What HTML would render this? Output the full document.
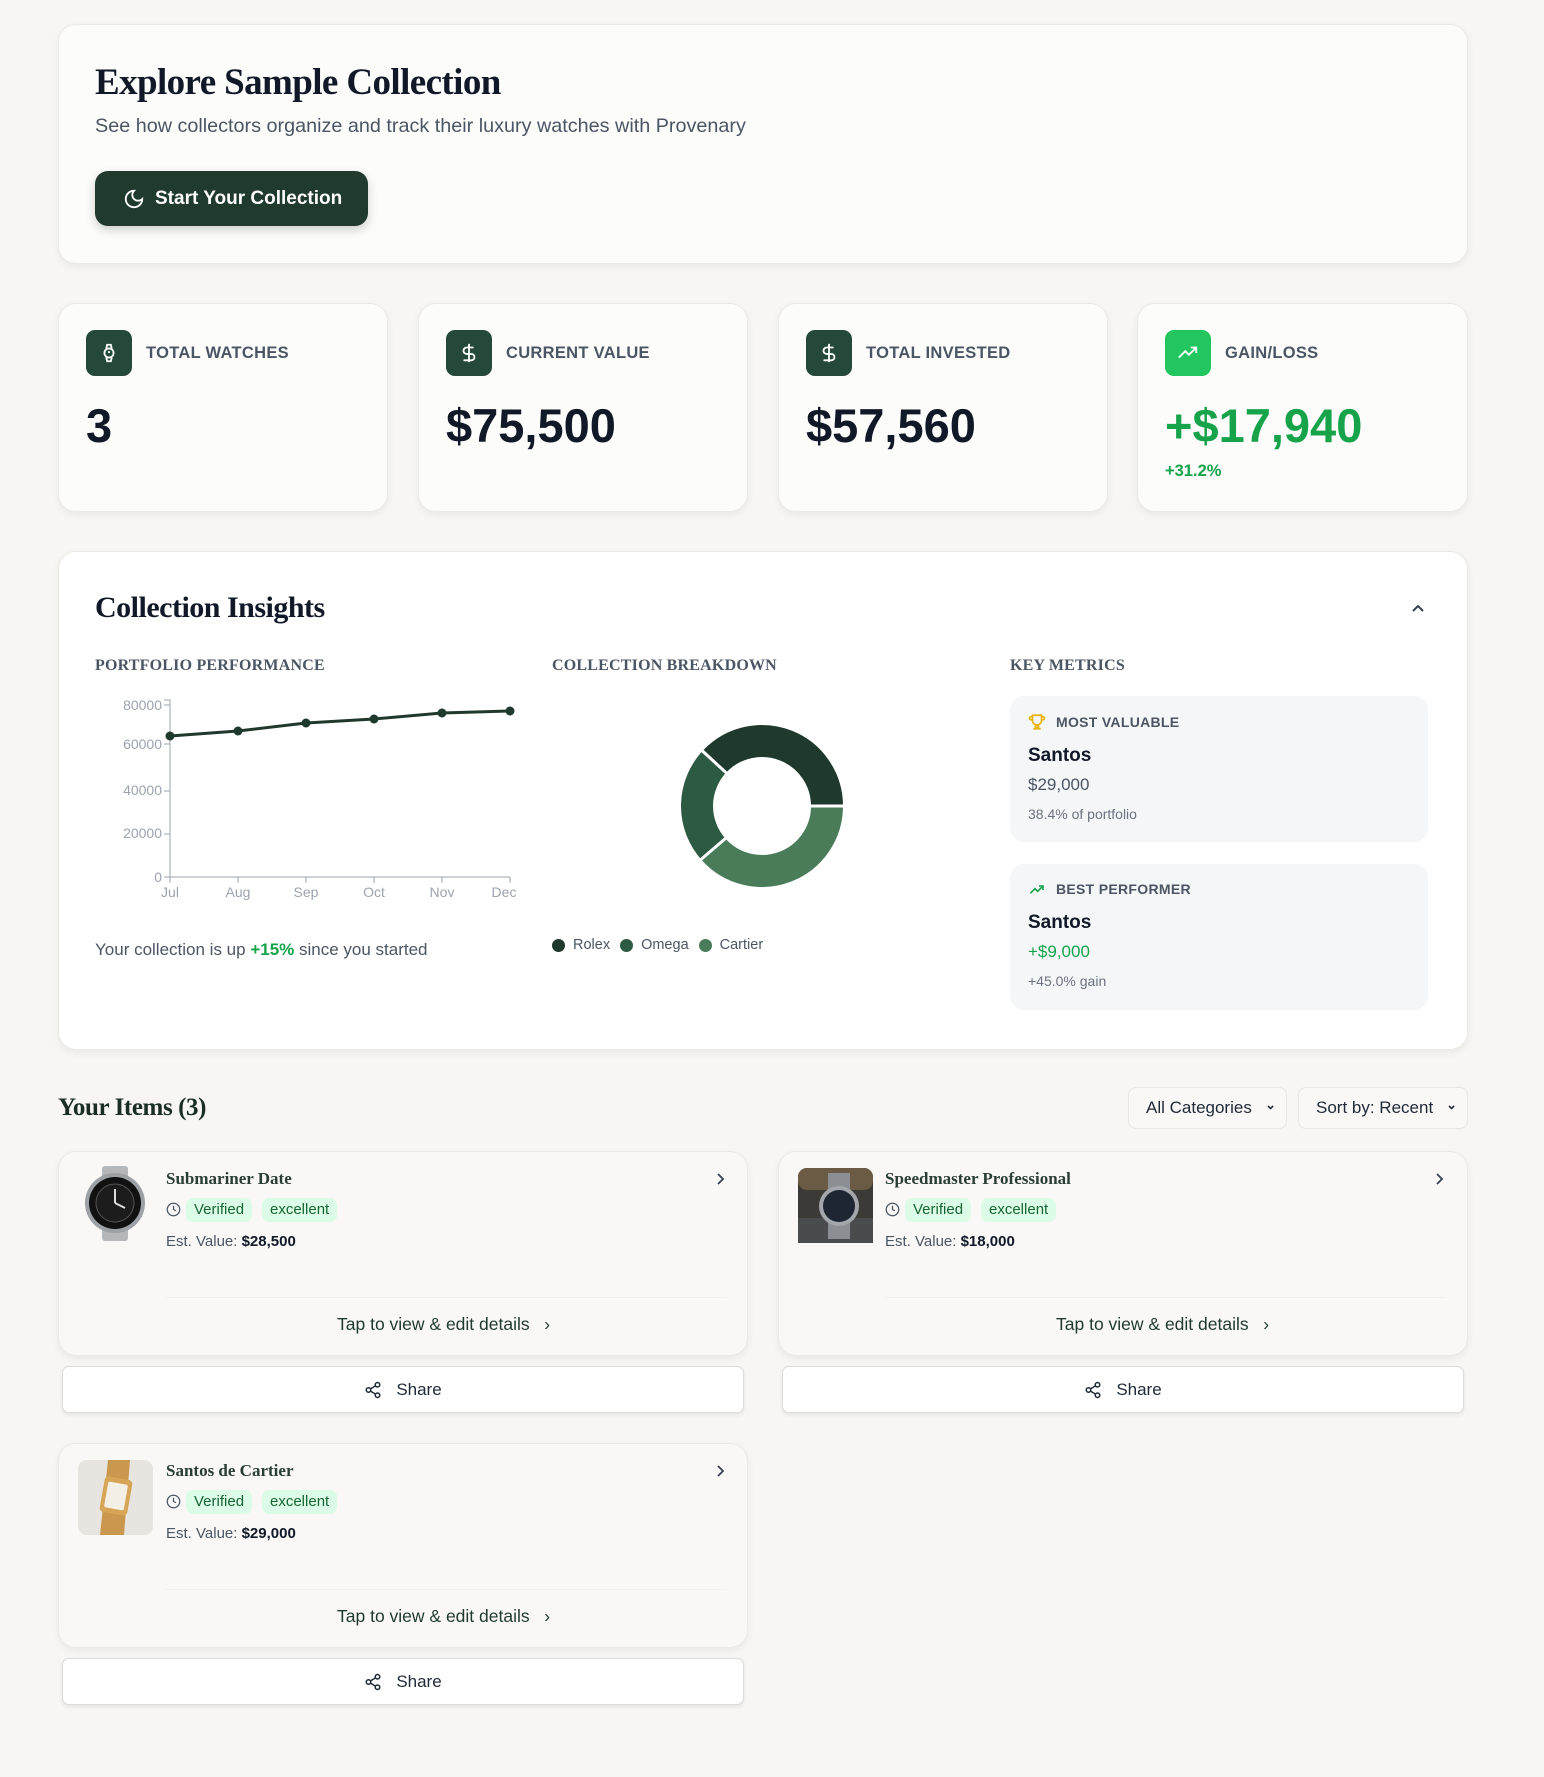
<!DOCTYPE html>
<html><head><meta charset="utf-8"><style>
*{box-sizing:border-box;margin:0;padding:0}
body{width:1544px;height:1777px;background:#f7f6f4;font-family:"Liberation Sans",sans-serif;color:#111827;position:relative;overflow:hidden}
.a{position:absolute}
.card{position:absolute;background:#fcfcfb;border:1px solid #ebeae6;border-radius:18px;box-shadow:0 3px 8px rgba(0,0,0,.06)}
.serif{font-family:"Liberation Serif",serif}
.lbl{font-size:16.5px;font-weight:bold;color:#4b5563;letter-spacing:.3px}
.icon{position:absolute;width:46px;height:46px;border-radius:9px;background:#24493a;display:flex;align-items:center;justify-content:center}
.val{position:absolute;font-size:47px;font-weight:bold;color:#111827}
.h3{position:absolute;font-family:"Liberation Serif",serif;font-size:16px;font-weight:bold;color:#4b5563;letter-spacing:.2px}
.km{position:absolute;left:1010px;width:418px;background:#f5f6f7;border-radius:14px}
.badge{position:absolute;height:24px;line-height:24px;padding:0 8px;border-radius:7px;background:#dcfce7;color:#166534;font-size:15px}
.share{position:absolute;height:47px;background:#fff;border:1px solid #dcdcdc;border-radius:7px;box-shadow:0 2px 4px rgba(0,0,0,.08);display:flex;align-items:center;justify-content:center;font-size:17px;color:#1f2937;gap:14px}
.sel{position:absolute;top:1087px;height:42px;border:1px solid #e7e6e2;border-radius:8px;background:#f9f8f6;font-size:17px;color:#1f2937;line-height:40px;padding-left:17px}
.nm{position:absolute;font-family:"Liberation Serif",serif;font-size:17px;font-weight:bold;color:#2a3d33}
</style></head><body>

<div class="card" style="left:58px;top:24px;width:1410px;height:240px"></div>
<div class="a serif" style="left:95px;top:61px;font-size:37px;font-weight:bold;letter-spacing:-0.6px;color:#111827">Explore Sample Collection</div>
<div class="a" style="left:95px;top:115px;font-size:19.8px;color:#4b5563">See how collectors organize and track their luxury watches with Provenary</div>
<div class="a" style="left:95px;top:171px;width:273px;height:55px;background:#213a2e;border-radius:13px;box-shadow:0 4px 10px rgba(0,0,0,.18);color:#fff;font-size:19px;font-weight:bold;display:flex;align-items:center;padding-left:28px;gap:10px">
<svg width="22" height="22" viewBox="0 0 24 24" fill="none" stroke="#fff" stroke-width="2"><path d="M12 3a6 6 0 0 0 9 9 9 9 0 1 1-9-9z"/></svg>Start Your Collection</div>

<div class="card" style="left:58px;top:303px;width:330px;height:209px"></div>
<div class="card" style="left:418px;top:303px;width:330px;height:209px"></div>
<div class="card" style="left:778px;top:303px;width:330px;height:209px"></div>
<div class="card" style="left:1137px;top:303px;width:331px;height:209px"></div>

<div class="icon" style="left:86px;top:330px"><svg width="22" height="22" viewBox="0 0 24 24" fill="none" stroke="#fff" stroke-width="2"><circle cx="12" cy="12" r="5"/><path d="M9 7l1-4h4l1 4M9 17l1 4h4l1-4M12 10v2"/></svg></div>
<div class="a lbl" style="left:146px;top:344px">TOTAL WATCHES</div>
<div class="val" style="left:86px;top:398px">3</div>

<div class="icon" style="left:446px;top:330px"><svg width="22" height="22" viewBox="0 0 24 24" fill="none" stroke="#fff" stroke-width="2"><path d="M12 2v20M17 6H9.5a3.5 3.5 0 0 0 0 7h5a3.5 3.5 0 0 1 0 7H6"/></svg></div>
<div class="a lbl" style="left:506px;top:344px">CURRENT VALUE</div>
<div class="val" style="left:446px;top:398px">$75,500</div>

<div class="icon" style="left:806px;top:330px"><svg width="22" height="22" viewBox="0 0 24 24" fill="none" stroke="#fff" stroke-width="2"><path d="M12 2v20M17 6H9.5a3.5 3.5 0 0 0 0 7h5a3.5 3.5 0 0 1 0 7H6"/></svg></div>
<div class="a lbl" style="left:866px;top:344px">TOTAL INVESTED</div>
<div class="val" style="left:806px;top:398px">$57,560</div>

<div class="icon" style="left:1165px;top:330px;background:#22c55e"><svg width="22" height="22" viewBox="0 0 24 24" fill="none" stroke="#fff" stroke-width="2"><path d="M2 17l7-7 4 4 8-8M15 6h6v6"/></svg></div>
<div class="a lbl" style="left:1225px;top:344px">GAIN/LOSS</div>
<div class="val" style="left:1165px;top:398px;color:#16a34a">+$17,940</div>
<div class="a" style="left:1165px;top:462px;font-size:16.5px;font-weight:bold;color:#16a34a">+31.2%</div>

<div class="card" style="left:58px;top:551px;width:1410px;height:499px;background:#fff"></div>
<div class="a serif" style="left:95px;top:591px;font-size:30px;font-weight:bold;letter-spacing:-0.5px">Collection Insights</div>
<svg class="a" style="left:1408px;top:600px" width="20" height="16" viewBox="0 0 20 16" fill="none" stroke="#374151" stroke-width="2"><path d="M5 11l5-5 5 5"/></svg>
<div class="h3" style="left:95px;top:657px">PORTFOLIO PERFORMANCE</div>
<div class="h3" style="left:552px;top:657px">COLLECTION BREAKDOWN</div>
<div class="h3" style="left:1010px;top:657px">KEY METRICS</div>

<svg class="a" style="left:100px;top:690px" width="440" height="215" viewBox="100 690 440 215" font-family="Liberation Sans" font-size="14" fill="#9ca3af">
<g stroke="#9ca3af" stroke-width="1" fill="none"><path d="M164 700h6v177h340M164 705h6M164 744h6M164 791h6M164 834h6M164 877h6M170 877v6M238 877v6M306 877v6M374 877v6M442 877v6M510 877v6"/></g>
<g text-anchor="end"><text x="162" y="710">80000</text><text x="162" y="749">60000</text><text x="162" y="795">40000</text><text x="162" y="838">20000</text><text x="162" y="882">0</text></g>
<g text-anchor="middle"><text x="170" y="897">Jul</text><text x="238" y="897">Aug</text><text x="306" y="897">Sep</text><text x="374" y="897">Oct</text><text x="442" y="897">Nov</text><text x="504" y="897">Dec</text></g>
<polyline points="170,736 238,731 306,723 374,719 442,713 510,711" fill="none" stroke="#1f3a2d" stroke-width="3"/>
<g fill="#1f3a2d"><circle cx="170" cy="736" r="4.5"/><circle cx="238" cy="731" r="4.5"/><circle cx="306" cy="723" r="4.5"/><circle cx="374" cy="719" r="4.5"/><circle cx="442" cy="713" r="4.5"/><circle cx="510" cy="711" r="4.5"/></g>
</svg>
<div class="a" style="left:95px;top:940px;font-size:17px;color:#4b5563">Your collection is up <b style="color:#16a34a">+15%</b> since you started</div>

<svg class="a" style="left:672px;top:716px" width="180" height="180" viewBox="672 716 180 180" fill="none" stroke-width="32">
<path d="M827 806A65 65 0 0 1 713.7 849.5" stroke="#4a7c5a"/>
<path d="M713.7 849.5A65 65 0 0 1 715.3 760.8" stroke="#2d5a43"/>
<path d="M715.3 760.8A65 65 0 0 1 827 806" stroke="#1f3a2d"/>
<g stroke="#fff" stroke-width="3"><path d="M800 806h45M733 832l-35 30M733 779l-35-32"/></g>
</svg>
<div class="a" style="left:552px;top:937px;font-size:14.5px;color:#4b5563;display:flex;align-items:center;gap:8px">
<span style="width:13px;height:13px;border-radius:50%;background:#1f3a2d"></span>Rolex<span style="width:13px;height:13px;border-radius:50%;background:#2d5a43;margin-left:2px"></span>Omega<span style="width:13px;height:13px;border-radius:50%;background:#4a7c5a;margin-left:2px"></span>Cartier</div>

<div class="km" style="top:696px;height:146px"></div>
<svg class="a" style="left:1028px;top:713px" width="18" height="18" viewBox="0 0 24 24" fill="none" stroke="#eab308" stroke-width="2.2"><path d="M6 9H4a2 2 0 0 1 0-4h2M18 9h2a2 2 0 0 0 0-4h-2M6 3h12v7a6 6 0 0 1-12 0zM10 16v3h4v-3M7 21h10"/></svg>
<div class="a lbl" style="left:1056px;top:714px;font-size:14px">MOST VALUABLE</div>
<div class="a" style="left:1028px;top:745px;font-size:19px;font-weight:bold">Santos</div>
<div class="a" style="left:1028px;top:775px;font-size:17px;color:#4b5563">$29,000</div>
<div class="a" style="left:1028px;top:806px;font-size:14px;color:#6b7280">38.4% of portfolio</div>

<div class="km" style="top:864px;height:146px"></div>
<svg class="a" style="left:1028px;top:882px" width="18" height="16" viewBox="0 0 24 24" fill="none" stroke="#16a34a" stroke-width="2.4"><path d="M2 17l7-7 4 4 8-8M15 6h6v6"/></svg>
<div class="a lbl" style="left:1056px;top:881px;font-size:14px">BEST PERFORMER</div>
<div class="a" style="left:1028px;top:912px;font-size:19px;font-weight:bold">Santos</div>
<div class="a" style="left:1028px;top:942px;font-size:17px;color:#16a34a">+$9,000</div>
<div class="a" style="left:1028px;top:973px;font-size:14px;color:#6b7280">+45.0% gain</div>

<div class="a serif" style="left:58px;top:1094px;font-size:25px;font-weight:bold;letter-spacing:-0.4px;color:#1a2e24">Your Items (3)</div>
<div class="sel" style="left:1128px;width:159px">All Categories<span style="position:absolute;right:10px;top:-3px;font-size:13px;font-weight:bold">&#8964;</span></div>
<div class="sel" style="left:1298px;width:170px">Sort by: Recent<span style="position:absolute;right:10px;top:-3px;font-size:13px;font-weight:bold">&#8964;</span></div>

<div class="card" style="left:58px;top:1151px;width:690px;height:205px;background:#f9f8f6"></div>
<div class="card" style="left:778px;top:1151px;width:690px;height:205px;background:#f9f8f6"></div>
<div class="card" style="left:58px;top:1443px;width:690px;height:205px;background:#f9f8f6"></div>

<svg class="a" style="left:78px;top:1166px" width="75" height="75" viewBox="0 0 75 75"><rect x="24" y="0" width="26" height="75" rx="3" fill="#b5b8bb"/><circle cx="37" cy="37" r="30" fill="#9da1a5"/><circle cx="37" cy="37" r="26" fill="#111"/><circle cx="37" cy="37" r="19" fill="#1c1c1c" stroke="#555"/><path d="M37 37l0-14M37 37l10 5" stroke="#ddd" stroke-width="2"/></svg>
<svg class="a" style="left:798px;top:1168px" width="75" height="75" viewBox="0 0 75 75"><rect width="75" height="75" rx="9" fill="#3b3a36"/><rect width="75" height="22" rx="9" fill="#6b5a44"/><path d="M0 50h75v25H0z" fill="#4a4b4d"/><rect x="30" y="5" width="22" height="66" fill="#8b8f94"/><circle cx="41" cy="38" r="20" fill="#a3a7ab"/><circle cx="41" cy="38" r="16" fill="#1e2633"/></svg>
<svg class="a" style="left:78px;top:1460px" width="75" height="75" viewBox="0 0 75 75"><rect width="75" height="75" rx="9" fill="#e8e4df"/><path d="M30 0h22l-6 75H22z" fill="#c9974d"/><rect x="24" y="18" width="28" height="36" rx="4" fill="#d6a656" transform="rotate(10 38 36)"/><rect x="28" y="23" width="20" height="26" rx="2" fill="#f4efe5" transform="rotate(10 38 36)"/></svg>

<div class="nm" style="left:166px;top:1169px">Submariner Date</div>
<div class="nm" style="left:885px;top:1169px">Speedmaster Professional</div>
<div class="nm" style="left:166px;top:1461px">Santos de Cartier</div>

<svg class="a" style="left:713px;top:1171px" width="14" height="16" viewBox="0 0 14 16" fill="none" stroke="#374151" stroke-width="1.8"><path d="M5 3l5 5-5 5"/></svg>
<svg class="a" style="left:1432px;top:1171px" width="14" height="16" viewBox="0 0 14 16" fill="none" stroke="#374151" stroke-width="1.8"><path d="M5 3l5 5-5 5"/></svg>
<svg class="a" style="left:713px;top:1463px" width="14" height="16" viewBox="0 0 14 16" fill="none" stroke="#374151" stroke-width="1.8"><path d="M5 3l5 5-5 5"/></svg>

<svg class="a" style="left:166px;top:1202px" width="15" height="15" viewBox="0 0 24 24" fill="none" stroke="#4b5563" stroke-width="2"><circle cx="12" cy="12" r="10"/><path d="M12 6v6l4 2"/></svg>
<div class="badge" style="left:186px;top:1198px">Verified</div><div class="badge" style="left:262px;top:1198px">excellent</div>
<div class="a" style="left:166px;top:1233px;font-size:15px;color:#4b5563">Est. Value: <b style="color:#111827">$28,500</b></div>

<svg class="a" style="left:885px;top:1202px" width="15" height="15" viewBox="0 0 24 24" fill="none" stroke="#4b5563" stroke-width="2"><circle cx="12" cy="12" r="10"/><path d="M12 6v6l4 2"/></svg>
<div class="badge" style="left:905px;top:1198px">Verified</div><div class="badge" style="left:981px;top:1198px">excellent</div>
<div class="a" style="left:885px;top:1233px;font-size:15px;color:#4b5563">Est. Value: <b style="color:#111827">$18,000</b></div>

<svg class="a" style="left:166px;top:1494px" width="15" height="15" viewBox="0 0 24 24" fill="none" stroke="#4b5563" stroke-width="2"><circle cx="12" cy="12" r="10"/><path d="M12 6v6l4 2"/></svg>
<div class="badge" style="left:186px;top:1490px">Verified</div><div class="badge" style="left:262px;top:1490px">excellent</div>
<div class="a" style="left:166px;top:1525px;font-size:15px;color:#4b5563">Est. Value: <b style="color:#111827">$29,000</b></div>

<div class="a" style="left:166px;top:1297px;width:561px;height:1px;background:#f1f0ec"></div>
<div class="a" style="left:885px;top:1297px;width:561px;height:1px;background:#f1f0ec"></div>
<div class="a" style="left:166px;top:1589px;width:561px;height:1px;background:#f1f0ec"></div>

<div class="a" style="left:337px;top:1314px;font-size:17.5px;color:#1f3a2d">Tap to view &amp; edit details &nbsp;&nbsp;&#8250;</div>
<div class="a" style="left:1056px;top:1314px;font-size:17.5px;color:#1f3a2d">Tap to view &amp; edit details &nbsp;&nbsp;&#8250;</div>
<div class="a" style="left:337px;top:1606px;font-size:17.5px;color:#1f3a2d">Tap to view &amp; edit details &nbsp;&nbsp;&#8250;</div>

<div class="share" style="left:62px;top:1366px;width:682px"><svg width="18" height="18" viewBox="0 0 24 24" fill="none" stroke="#1f2937" stroke-width="2"><circle cx="18" cy="5" r="3"/><circle cx="6" cy="12" r="3"/><circle cx="18" cy="19" r="3"/><path d="M8.6 13.5l6.8 4M15.4 6.5l-6.8 4"/></svg>Share</div>
<div class="share" style="left:782px;top:1366px;width:682px"><svg width="18" height="18" viewBox="0 0 24 24" fill="none" stroke="#1f2937" stroke-width="2"><circle cx="18" cy="5" r="3"/><circle cx="6" cy="12" r="3"/><circle cx="18" cy="19" r="3"/><path d="M8.6 13.5l6.8 4M15.4 6.5l-6.8 4"/></svg>Share</div>
<div class="share" style="left:62px;top:1658px;width:682px"><svg width="18" height="18" viewBox="0 0 24 24" fill="none" stroke="#1f2937" stroke-width="2"><circle cx="18" cy="5" r="3"/><circle cx="6" cy="12" r="3"/><circle cx="18" cy="19" r="3"/><path d="M8.6 13.5l6.8 4M15.4 6.5l-6.8 4"/></svg>Share</div>

</body></html>
